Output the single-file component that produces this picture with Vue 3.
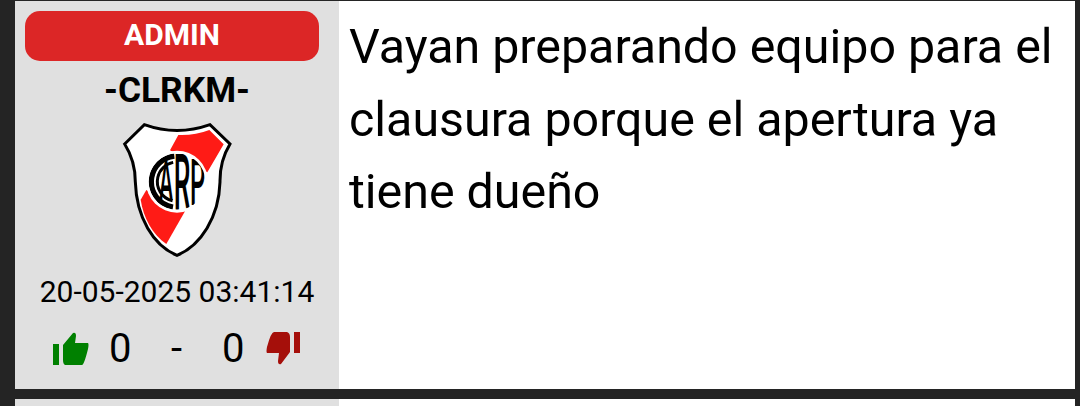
<script setup>
const post = {
  role: 'ADMIN', author: '-CLRKM-', date: '20-05-2025 03:41:14', up: 0, down: 0,
  text: 'Vayan preparando equipo para el clausura porque el apertura ya tiene dueño',
}
// Condensed monogram letters inside the crest's disc
const monogram = [
  { char: 'A', x: 148, y: 264, scale: 0.37, size: 166 },
  { char: 'R', x: 191, y: 290, scale: 0.34, size: 234 },
  { char: 'P', x: 240, y: 278, scale: 0.37, size: 194 },
]
</script>

<template>
  <main class="thread">
    <article class="post">
      <aside class="side">
        <div class="role">{{ post.role }}</div>
        <div class="author">{{ post.author }}</div>
        <svg class="crest" viewBox="0 0 405 465">
          <defs>
            <clipPath id="disc"><circle cx="201" cy="209" r="85" /></clipPath>
          </defs>
          <path d="M44 96 L103 38 Q201 73 300 38 L360 96 Q329 147 330 210 C327 315 272 401 201 430 C130 401 79 315 76 210 Q76 147 44 96Z" fill="#fff" stroke="#000" stroke-width="9" />
          <path d="M205 69 Q254 71 298 54 L341 97 Q322 130 292 181 L180 115Z" fill="#ff1b16" />
          <path d="M109 234 L92 263 C100 318 128 368 169 396 L225 298Z" fill="#ff1b16" />
          <circle cx="201" cy="209" r="93" fill="#fff" />
          <g clip-path="url(#disc)">
            <circle class="ring" cx="201" cy="209" r="77" pathLength="360" stroke-width="16" stroke-dasharray="164 196" transform="rotate(99 201 209)" />
            <circle class="ring" cx="201" cy="209" r="59" pathLength="360" stroke-width="9" stroke-dasharray="155 205" transform="rotate(103 201 209)" />
            <text v-for="m in monogram" :key="m.char" class="mono" :transform="`translate(${m.x} ${m.y}) scale(${m.scale} 1)`" :font-size="m.size">{{ m.char }}</text>
          </g>
        </svg>
        <div class="date">{{ post.date }}</div>
        <div class="votes">
          <svg class="thumb up" viewBox="0 0 36 34"><path d="M0 12H6V33H0ZM10 13 20 1Q23 0 23 4L22 11H35Q36 12 35 17Q31 33 29 33H12Q10 32 10 28Z" fill="#008000" /></svg>
          <span class="count">{{ post.up }}</span><span class="dash">-</span><span class="count last">{{ post.down }}</span>
          <svg class="thumb down" viewBox="0 0 36 34"><path d="M28 0H34V21H28ZM24 20 15 32Q12 33 12 29L13 21H1Q0 20 1 15Q5 0 8 0H21Q24 1 24 5Z" fill="#a50f0a" /></svg>
        </div>
      </aside>
      <p class="message">{{ post.text }}</p>
    </article>
    <article class="post next"><aside class="side"></aside></article>
  </main>
</template>

<style>
body { background: #242424; }
</style>
<style scoped>
.thread { box-sizing: border-box; height: 406px; padding: 1px 5px 0 15px; overflow: hidden; background: #242424; color: #000; font-family: Roboto, sans-serif; }
.post { display: flex; height: 388px; background: #fff; }
.next { margin-top: 10px; }
.side { box-sizing: border-box; flex: none; width: 324px; padding: 10px 20px 0 10px; background: #e0e0e0; display: flex; flex-direction: column; align-items: center; }
.role { width: 294px; height: 50px; border-radius: 15px; background: #dc2626; color: #fff; font-weight: 700; font-size: 30px; line-height: 48px; text-align: center; }
.author { margin-left: 10px; height: 51px; line-height: 59px; font-size: 35.3px; font-weight: 700; white-space: nowrap; }
.crest { flex: none; width: 135px; height: 155px; margin-left: 10px; }
.ring { fill: none; stroke: #000; }
.mono { fill: #000; font-family: Roboto, sans-serif; font-weight: 500; }
.date { height: 50px; margin-left: 10px; line-height: 50px; font-size: 30px; white-space: nowrap; }
.votes { display: flex; align-items: center; align-self: flex-start; margin: 7px 0 0 28px; height: 48px; font-size: 40px; }
.thumb { flex: none; width: 36px; height: 34px; position: relative; top: 1px; }
.count { width: 22px; margin-left: 20px; }
.dash { width: 12px; margin-left: 40px; }
.last { margin-left: 39px; }
.down { margin-left: 22px; }
.message { margin: 0; padding: 10px 5px 0 10px; font-size: 48.36px; line-height: 72.5px; }
</style>
